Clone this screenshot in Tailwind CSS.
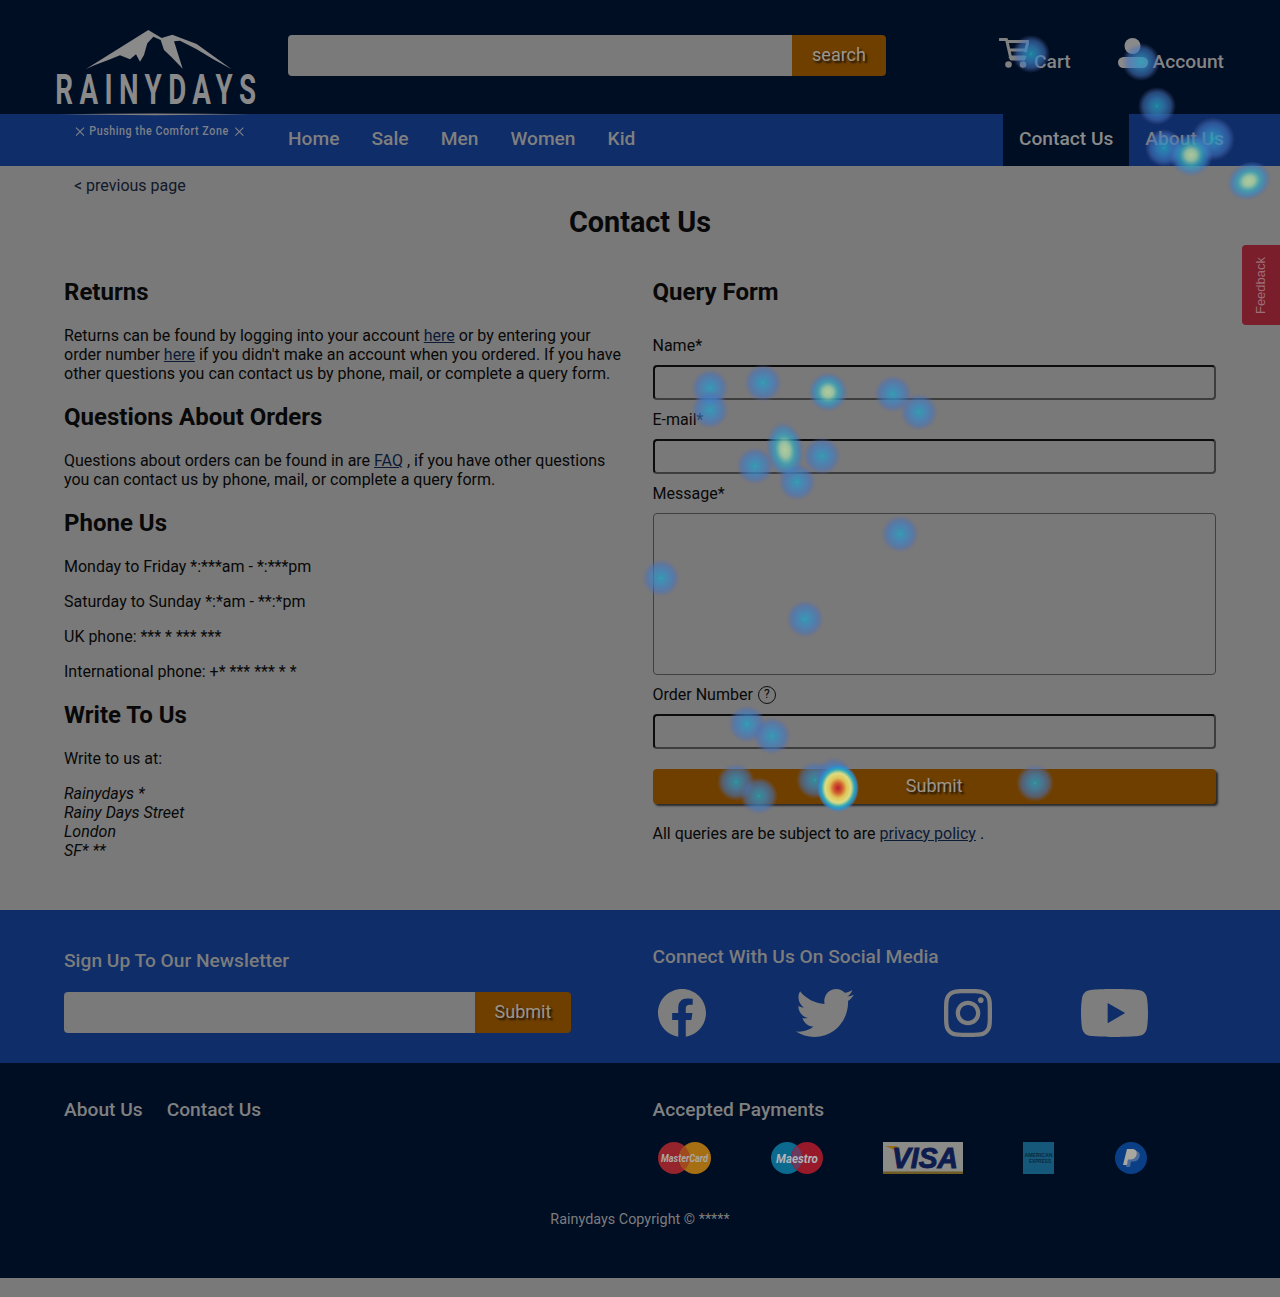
<!DOCTYPE html>
<html lang="en">
<head>
<meta charset="UTF-8">
<title>Rainydays - Contact Us</title>
<script src="https://cdn.jsdelivr.net/npm/@tailwindcss/browser@4"></script>
</head>
<body class="relative bg-[#797979] font-['Roboto',sans-serif] text-[16px] leading-[19px] text-[#080808] overflow-x-hidden">

<!-- header -->
<header class="flex h-[114px] bg-[#000e24] pl-[288px] pr-[56px] text-[19.2px] font-medium text-[#858585]">
  <form class="flex mt-[35px] h-[41px] w-[598px]">
    <input type="text" aria-label="search" class="w-[504px] rounded-l bg-[#7a7a7a]">
    <button type="button" class="w-[94px] pb-[2px] rounded-r bg-[#6f3f00] text-[18px] font-normal text-[#9c958b] [text-shadow:2px_2px_2px_#1a1206]">search</button>
  </form>
  <div class="ml-auto flex mt-[38px] h-[30px] text-[#858585]">
    <a href="#" class="flex">
      <svg class="w-[30px] h-[30px]" viewBox="0 0 30 30" fill="none" stroke="#808080" stroke-width="3" stroke-linecap="round" stroke-linejoin="round">
        <path d="M1 1.5H7.5L12 21H25M8.5 3.5H29L26.5 13M10 12H27M11 19H26"/>
        <circle cx="9.5" cy="26.5" r="1.8" fill="#808080"/><circle cx="24" cy="26.5" r="1.8" fill="#808080"/>
      </svg>
      <span class="ml-[5px] mt-[14px]">Cart</span>
    </a>
    <a href="#" class="flex ml-[47px]">
      <svg class="w-[30px] h-[30px]" viewBox="0 0 30 30" fill="#8a8a8a">
        <circle cx="14.5" cy="8" r="8"/><rect x="0" y="19" width="30" height="11" rx="5.5"/>
      </svg>
      <span class="ml-[5px] mt-[14px]">Account</span>
    </a>
  </div>
</header>

<!-- nav -->
<nav class="flex h-[52px] items-center bg-[#0f2d69] pl-[288px] pr-[40px] text-[19.2px] font-medium text-[#7f7f7f]">
  <a href="#" class="mr-8 mb-[3px]">Home</a>
  <a href="#" class="mr-8 mb-[3px]">Sale</a>
  <a href="#" class="mr-8 mb-[3px]">Men</a>
  <a href="#" class="mr-8 mb-[3px]">Women</a>
  <a href="#" class="mb-[3px]">Kid</a>
  <a href="#" class="ml-auto flex h-full items-center bg-[#000e24] px-4 pb-[3px] text-[#8a8a8a]">Contact Us</a>
  <a href="#" class="flex h-full items-center px-4 pb-[3px]">About Us</a>
</nav>

<!-- logo overlaps header and nav -->
<svg class="absolute left-[40px] top-[20px] w-[240px] h-[130px]" viewBox="0 0 720 390" fill="#8a8a8a">
  <path d="M138 147L325 30L365 54L397 44L470 72L575 148L520 118L470 88L420 62L402 64L412 95L428 146L395 112L372 90L362 60L340 50L322 70L312 105L300 125L288 103L270 118L240 106L205 120L165 135Z"/>
  <text transform="translate(46 252) scale(.66 1)" font-family="Roboto" font-weight="700" font-size="126" textLength="912" lengthAdjust="spacing">RAINYDAYS</text>
  <path d="M60 283Q345 278 630 283Q345 288 60 283Z" fill="#808080"/>
  <text transform="translate(148 346) scale(.85 1)" font-family="Roboto" font-weight="500" font-size="38" textLength="490" lengthAdjust="spacing" fill="#7c8088">Pushing the Comfort Zone</text>
  <path d="M108 323L132 347M132 323L108 347M586 323L610 347M610 323L586 347" stroke="#7c8088" stroke-width="3.5" fill="none"/>
</svg>

<!-- main -->
<main class="h-[744px] px-16">
  <a href="#" class="block pt-[10px] pl-[10px] text-[#10182a]">&lt; previous page</a>
  <h1 class="mt-[11px] text-center text-[28.8px] font-bold leading-[33px]">Contact Us</h1>
  <div class="mt-[39px] grid grid-cols-[563px_563.5px] gap-x-[25.5px]">
    <section>
      <h2 class="text-[24px] font-bold leading-[28px]">Returns</h2>
      <p class="mt-5">Returns can be found by logging into your account <a href="#" class="underline text-[#0c1a36]">here</a> or by entering your order number <a href="#" class="underline text-[#0c1a36]">here</a> if you didn't make an account when you ordered. If you have other questions you can contact us by phone, mail, or complete a query form.</p>
      <h2 class="mt-5 text-[24px] font-bold leading-[28px]">Questions About Orders</h2>
      <p class="mt-5">Questions about orders can be found in are <a href="#" class="underline text-[#0c1a36]">FAQ</a> , if you have other questions you can contact us by phone, mail, or complete a query form.</p>
      <h2 class="mt-5 text-[24px] font-bold leading-[28px]">Phone Us</h2>
      <p class="mt-5">Monday to Friday *:***am - *:***pm</p>
      <p class="mt-4">Saturday to Sunday *:*am - **:*pm</p>
      <p class="mt-4">UK phone: *** * *** ***</p>
      <p class="mt-4">International phone: +* *** *** * *</p>
      <h2 class="mt-5 text-[24px] font-bold leading-[28px]">Write To Us</h2>
      <p class="mt-5">Write to us at:</p>
      <address class="mt-4 italic">Rainydays *<br>Rainy Days Street<br>London<br>SF* **</address>
    </section>
    <section>
      <h2 class="text-[24px] font-bold leading-[28px]">Query Form</h2>
      <form class="mt-[30px] flex flex-col">
        <label for="name">Name*</label>
        <input id="name" type="text" class="mt-[10px] h-[35px] rounded border-2 border-t-[#0c0c0c] border-l-[#0c0c0c] border-r-[#3d3d3d] border-b-[#3d3d3d]">
        <label for="email" class="mt-[10px]">E-mail*</label>
        <input id="email" type="email" class="mt-[10px] h-[35px] rounded border-2 border-t-[#0c0c0c] border-l-[#0c0c0c] border-r-[#3d3d3d] border-b-[#3d3d3d]">
        <label for="message" class="mt-[10px]">Message*</label>
        <textarea id="message" class="mt-[10px] h-[162px] resize-none rounded border border-[#404040]"></textarea>
        <label for="order" class="mt-[10px] flex items-center">Order Number
          <span class="ml-[5px] flex h-[18px] w-[18px] items-center justify-center rounded-full border border-[#111] text-[12px]">?</span>
        </label>
        <input id="order" type="text" class="mt-[10px] h-[35px] rounded border-2 border-t-[#0c0c0c] border-l-[#0c0c0c] border-r-[#3d3d3d] border-b-[#3d3d3d]">
        <button type="button" class="mt-5 h-[35px] pb-[2px] rounded bg-[#6f3f00] text-[18px] text-[#9c958b] shadow-[2px_2px_2px_#2a2a2a] [text-shadow:2px_2px_2px_#1a1206]">Submit</button>
      </form>
      <p class="mt-5">All queries are be subject to are <a href="#" class="underline text-[#0c1a36]">privacy policy</a> .</p>
    </section>
  </div>
</main>

<!-- newsletter and social -->
<section class="h-[153px] bg-[#0f2d69] px-16 grid grid-cols-[563px_563.5px] gap-x-[25.5px] text-[#7c7c7c]">
  <div class="pt-[39px]">
    <h3 class="text-[19.2px] font-medium leading-[23px]">Sign Up To Our Newsletter</h3>
    <form class="mt-[20px] flex h-[41px] w-[507px]">
      <input type="email" aria-label="email" class="w-[411px] rounded-l bg-[#7a7a7a]">
      <button type="button" class="w-[96px] pb-[2px] rounded-r bg-[#6f3f00] text-[18px] text-[#9c958b] [text-shadow:2px_2px_2px_#1a1206]">Submit</button>
    </form>
  </div>
  <div class="pt-[35px]">
    <h3 class="text-[19.2px] font-medium leading-[23px]">Connect With Us On Social Media</h3>
    <div class="mt-[21px] ml-[5px] flex items-center">
      <svg class="w-[48px] h-[48px]" viewBox="8 8 496 496" fill="#7e7e7e"><path d="M504 256C504 119 393 8 256 8S8 119 8 256c0 123.78 90.69 226.38 209.25 245V327.69h-63V256h63v-54.64c0-62.15 37-96.48 93.67-96.48 27.14 0 55.52 4.84 55.52 4.84v61h-31.28c-30.8 0-40.41 19.12-40.41 38.73V256h68.78l-11 71.69h-57.78V501C413.31 482.38 504 379.78 504 256z"/></svg>
      <svg class="ml-[90px] w-[58px] h-[48px]" viewBox="0 48 512 416" preserveAspectRatio="none" fill="#7e7e7e"><path d="M459.37 151.716c.325 4.548.325 9.097.325 13.645 0 138.72-105.583 298.558-298.558 298.558-59.452 0-114.68-17.219-161.137-47.106 8.447.974 16.568 1.299 25.34 1.299 49.055 0 94.213-16.568 130.274-44.832-46.132-.975-84.792-31.188-98.112-72.772 6.498.974 12.995 1.624 19.818 1.624 9.421 0 18.843-1.3 27.614-3.573-48.081-9.747-84.143-51.98-84.143-102.985v-1.299c13.969 7.797 30.214 12.67 47.431 13.319-28.264-18.843-46.781-51.005-46.781-87.391 0-19.492 5.197-37.36 14.294-52.954 51.655 63.675 129.3 105.258 216.365 109.807-1.624-7.797-2.599-15.918-2.599-24.04 0-57.828 46.782-104.934 104.934-104.934 30.213 0 57.502 12.67 76.67 33.137 23.715-4.548 46.456-13.32 66.599-25.34-7.798 24.366-24.366 44.833-46.132 57.827 21.117-2.273 41.584-8.122 60.426-16.243-14.292 20.791-32.161 39.308-52.628 54.253z"/></svg>
      <svg class="ml-[90px] w-[48px] h-[48px]" viewBox="0 32 448 448" fill="#7e7e7e"><path d="M224.1 141c-63.6 0-114.9 51.3-114.9 114.9s51.3 114.9 114.9 114.9S339 319.5 339 255.9 287.7 141 224.1 141zm0 189.6c-41.1 0-74.7-33.5-74.7-74.7s33.5-74.7 74.7-74.7 74.7 33.5 74.7 74.7-33.6 74.7-74.7 74.7zm146.4-194.3c0 14.9-12 26.8-26.8 26.8-14.9 0-26.8-12-26.8-26.8s12-26.8 26.8-26.8 26.8 12 26.8 26.8zm76.1 27.2c-1.7-35.9-9.9-67.7-36.2-93.9-26.2-26.2-58-34.4-93.9-36.2-37-2.1-147.9-2.1-184.9 0-35.8 1.7-67.6 9.9-93.9 36.1s-34.4 58-36.2 93.9c-2.1 37-2.1 147.9 0 184.9 1.7 35.9 9.9 67.7 36.2 93.9s58 34.4 93.9 36.2c37 2.1 147.9 2.1 184.9 0 35.9-1.7 67.7-9.9 93.9-36.2 26.2-26.2 34.4-58 36.2-93.9 2.1-37 2.1-147.8 0-184.8zM398.8 388c-7.8 19.6-22.9 34.7-42.6 42.6-29.5 11.7-99.5 9-132.1 9s-102.7 2.6-132.1-9c-19.6-7.8-34.7-22.9-42.6-42.6-11.7-29.5-9-99.5-9-132.1s-2.6-102.7 9-132.1c7.8-19.6 22.9-34.7 42.6-42.6 29.5-11.7 99.5-9 132.1-9s102.7-2.6 132.1 9c19.6 7.8 34.7 22.9 42.6 42.6 11.7 29.5 9 99.5 9 132.1s2.7 102.7-9 132.1z"/></svg>
      <svg class="ml-[89px] w-[67px] h-[48px]" viewBox="15 64 546 384" preserveAspectRatio="none" fill="#7e7e7e"><path d="M549.655 124.083c-6.281-23.65-24.787-42.276-48.284-48.597C458.781 64 288 64 288 64S117.22 64 74.629 75.486c-23.497 6.322-42.003 24.947-48.284 48.597-11.412 42.867-11.412 132.305-11.412 132.305s0 89.438 11.412 132.305c6.281 23.65 24.787 41.5 48.284 47.821C117.22 448 288 448 288 448s170.78 0 213.371-11.486c23.497-6.321 42.003-24.171 48.284-47.821 11.412-42.867 11.412-132.305 11.412-132.305s0-89.438-11.412-132.305zm-317.51 213.508V175.185l142.739 81.205-142.739 81.201z"/></svg>
    </div>
  </div>
</section>

<!-- footer -->
<footer class="h-[215px] bg-[#000e24] px-16 text-[#808080]">
  <div class="grid grid-cols-[563px_563.5px] gap-x-[25.5px]">
    <div class="pt-[35px] flex gap-6 text-[19.2px] font-medium leading-[23px]">
      <a href="#">About Us</a>
      <a href="#">Contact Us</a>
    </div>
    <div class="pt-[35px]">
      <h3 class="text-[19.2px] font-medium leading-[23px]">Accepted Payments</h3>
      <div class="mt-[21px] ml-[5px] flex items-center gap-[60px]">
        <svg class="w-[53px] h-[32px]" viewBox="0 0 53 32">
          <circle cx="16" cy="16" r="16" fill="#95242c"/><circle cx="37" cy="16" r="16" fill="#a66f14"/>
          <path d="M26.5 4a16 16 0 0 1 0 24a16 16 0 0 1 0-24Z" fill="#a04a1e"/>
          <text x="26.5" y="20" text-anchor="middle" font-family="Roboto" font-size="11" font-weight="700" font-style="italic" fill="#aca7a3" textLength="47" lengthAdjust="spacingAndGlyphs">MasterCard</text>
        </svg>
        <svg class="w-[52px] h-[32px]" viewBox="0 0 52 32">
          <circle cx="16" cy="16" r="16" fill="#0c6a8e"/><circle cx="36" cy="16" r="16" fill="#981a2a"/>
          <path d="M26 4a16 16 0 0 1 0 24a16 16 0 0 1 0-24Z" fill="#6a3a60"/>
          <text x="26" y="20.5" text-anchor="middle" font-family="Roboto" font-size="13" font-weight="700" font-style="italic" fill="#b0b4b8" textLength="42" lengthAdjust="spacingAndGlyphs">Maestro</text>
        </svg>
        <svg class="w-[80px] h-[32px]" viewBox="0 0 80 32">
          <rect width="80" height="32" fill="#8b8b88"/>
          <rect y="29.5" width="80" height="2.5" fill="#6e5c22"/>
          <path d="M2 4H14L18 15Q12 7 2 4Z" fill="#9a6a14"/>
          <text x="9" y="26" font-family="Liberation Sans" font-size="29" font-weight="700" font-style="italic" fill="#0e1c4e" stroke="#0e1c4e" stroke-width="1" textLength="66" lengthAdjust="spacingAndGlyphs">VISA</text>
        </svg>
        <svg class="w-[31px] h-[32px]" viewBox="0 0 31 32">
          <rect width="31" height="32" fill="#15587a"/>
          <text x="15.5" y="15" text-anchor="middle" font-family="Liberation Sans" font-size="5.5" font-weight="700" fill="#0a2a3e" textLength="28" lengthAdjust="spacingAndGlyphs">AMERICAN</text>
          <text x="17" y="21" text-anchor="middle" font-family="Liberation Sans" font-size="5.5" font-weight="700" fill="#0a2a3e" textLength="22" lengthAdjust="spacingAndGlyphs">EXPRESS</text>
        </svg>
        <svg class="ml-[1px] w-[32px] h-[32px]" viewBox="0 0 32 32">
          <circle cx="16" cy="16" r="16" fill="#0a3f86"/>
          <path d="M15 9H21Q26 10 24.5 15Q23 19.5 18 19.5H16L15 25H11Z" fill="#4a6a9a"/>
          <path d="M12 7H18Q23 8 21.5 13Q20 17.5 15 17.5H13L12 23H8Z" fill="#a8a8a0"/>
        </svg>
      </div>
    </div>
  </div>
  <p class="mt-[37px] text-center text-[14.4px] leading-[17px] text-[#7d7d7d]">Rainydays Copyright &copy; *****</p>
</footer>
<div class="h-[19px] bg-[#797979]"></div>

<!-- feedback tab -->
<a href="#" class="absolute right-0 top-[245px] flex h-[80px] w-[38px] items-center justify-center rounded-l bg-[#7a1e2b] font-['Liberation_Sans',sans-serif] text-[13px] text-[#9c7076]"><span class="-rotate-90 whitespace-nowrap">Feedback</span></a>

<!-- click heatmap -->
<svg class="absolute left-0 top-0 w-[1280px] h-[1297px] pointer-events-none" viewBox="0 0 1280 1297">
  <defs>
    <radialGradient id="cold">
      <stop offset="0" stop-color="#1fb4b4" stop-opacity=".9"/><stop offset=".07" stop-color="#2a9cc0" stop-opacity=".8"/><stop offset=".4" stop-color="#3a88c6" stop-opacity=".72"/><stop offset=".72" stop-color="#4476c0" stop-opacity=".55"/><stop offset="1" stop-color="#5a68a8" stop-opacity="0"/>
    </radialGradient>
    <radialGradient id="warm">
      <stop offset="0" stop-color="#b6cf9c" stop-opacity=".95"/><stop offset=".25" stop-color="#9cc8a4" stop-opacity=".9"/><stop offset=".5" stop-color="#38a4b8" stop-opacity=".8"/><stop offset=".75" stop-color="#3a84c6" stop-opacity=".6"/><stop offset="1" stop-color="#5a68a8" stop-opacity="0"/>
    </radialGradient>
    <radialGradient id="hot">
      <stop offset="0" stop-color="#b81e30"/><stop offset=".2" stop-color="#d0582c"/><stop offset=".42" stop-color="#e0c458"/><stop offset=".62" stop-color="#dcdc84"/><stop offset=".78" stop-color="#30a8b8"/><stop offset=".9" stop-color="#2c8cd0" stop-opacity=".8"/><stop offset="1" stop-color="#3a7fd0" stop-opacity="0"/>
    </radialGradient>
  </defs>
  <g fill="url(#cold)">
    <circle cx="1031" cy="54" r="19"/><circle cx="1141" cy="62" r="19"/><circle cx="1157" cy="106" r="19"/><circle cx="1164" cy="148" r="19"/><circle cx="1213" cy="139" r="22"/>
    <circle cx="710" cy="388" r="19"/><circle cx="710" cy="410" r="19"/><circle cx="763" cy="383" r="19"/><circle cx="893" cy="394" r="19"/><circle cx="919" cy="412" r="19"/>
    <circle cx="755" cy="466" r="19"/><circle cx="822" cy="456" r="19"/><circle cx="797" cy="482" r="19"/><circle cx="900" cy="534" r="19"/><circle cx="661" cy="578" r="19"/><circle cx="805" cy="619" r="19"/>
    <circle cx="747" cy="724" r="19"/><circle cx="772" cy="736" r="19"/><circle cx="736" cy="782" r="19"/><circle cx="759" cy="796" r="19"/><circle cx="815" cy="780" r="19"/><circle cx="834" cy="776" r="19"/><circle cx="1035" cy="783" r="19"/>
  </g>
  <g fill="url(#warm)">
    <circle cx="1191" cy="155" r="22"/>
    <ellipse cx="1249" cy="181" rx="23" ry="19" transform="rotate(-25 1249 181)"/>
    <circle cx="828" cy="392" r="20"/>
    <ellipse cx="785" cy="450" rx="19" ry="29" transform="rotate(-8 785 450)"/>
  </g>
  <ellipse cx="838" cy="788" rx="21" ry="24" fill="url(#hot)"/>
</svg>
</body>
</html>
